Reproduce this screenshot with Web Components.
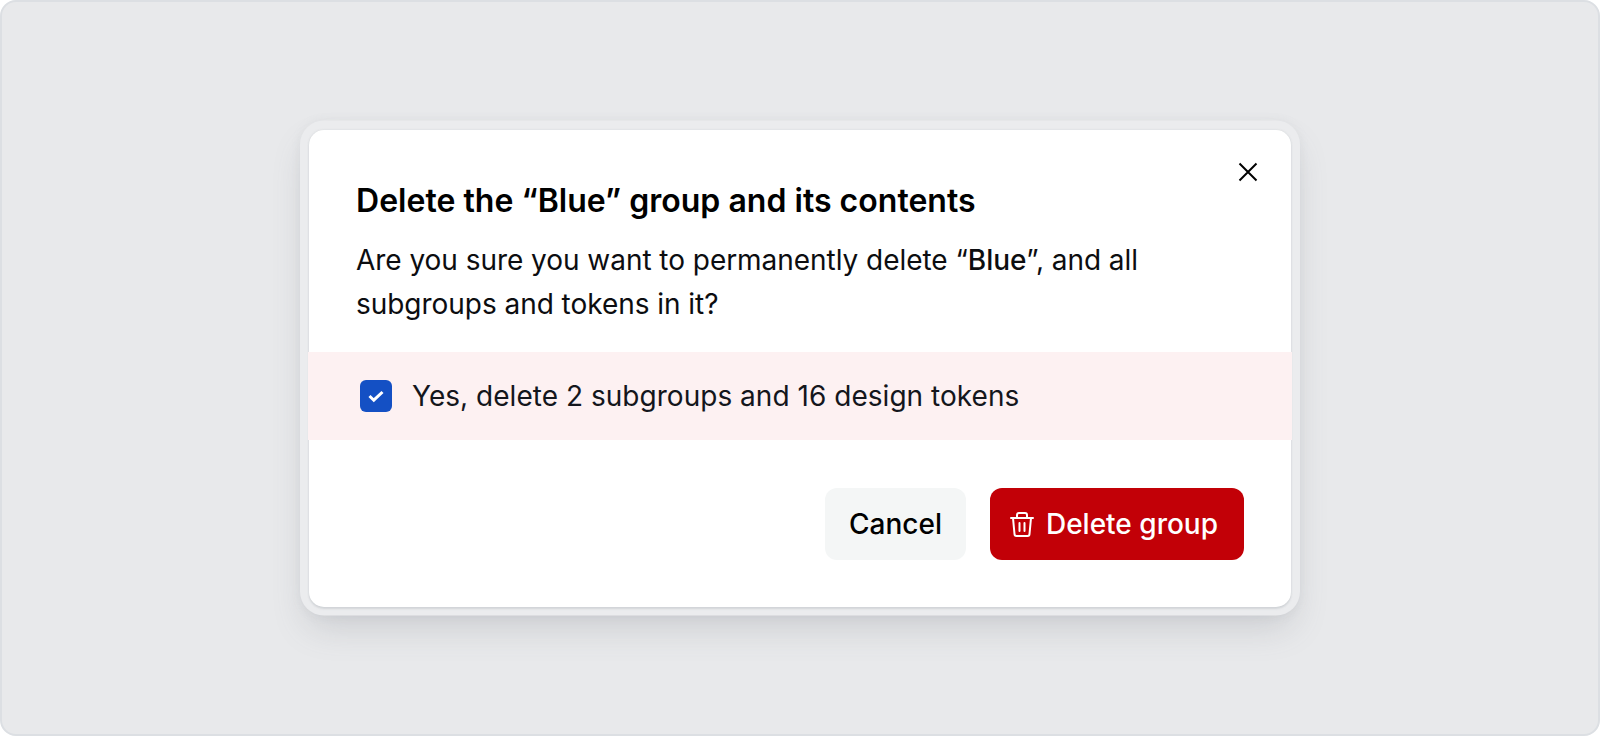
<!DOCTYPE html>
<html lang="en">
<head>
<meta charset="utf-8">
<title>Delete group</title>
<style>
  html, body { margin: 0; height: 100%; }
  body { font-family: Inter, "Liberation Sans", sans-serif; color: #000; }
  b { font-weight: 500; }
</style>
</head>
<body>
<app-canvas>
  <confirm-dialog heading="Delete the “Blue” group and its contents">
    <span slot="body">Are you sure you want to permanently delete “<b>Blue</b>”, and all subgroups and tokens in it?</span>
    <check-row slot="confirm">Yes, delete 2 subgroups and 16 design tokens</check-row>
    <action-button slot="actions">Cancel</action-button>
    <action-button slot="actions" variant="danger" icon="trash">Delete group</action-button>
  </confirm-dialog>
</app-canvas>

<script>
class AppCanvas extends HTMLElement {
  constructor() {
    super();
    this.attachShadow({ mode: 'open' });
    this.shadowRoot.innerHTML = `
      <style>
        :host {
          display: flex;
          align-items: center;
          justify-content: center;
          box-sizing: border-box;
          width: 100%;
          height: 736px;
          background: #e8e9eb;
          border: 2px solid #dcdfe3;
          border-radius: 16px;
        }
      </style>
      <slot></slot>
    `;
  }
}

class ConfirmDialog extends HTMLElement {
  constructor() {
    super();
    this.attachShadow({ mode: 'open' });
    this.shadowRoot.innerHTML = `
      <style>
        :host {
          display: block;
          position: relative;
          box-sizing: border-box;
          width: 982px;
          height: 477px;
          margin-top: 1px;
          background: #fff;
          border-radius: 15px;
          box-shadow:
            0 1.5px 2px rgba(180, 184, 190, .4),
            0 0 2px rgba(195, 199, 204, .5),
            0 -0.5px 0 9px #ebecee,
            0 0 10px 9px rgba(150, 154, 162, .12),
            0 18px 34px 2px rgba(100, 105, 115, .22);
        }
        .head { padding: 50px 47px 0; }
        h2 {
          margin: 0;
          font: 600 32px/42px Inter, sans-serif;
          letter-spacing: 0.02px;
        }
        .body {
          margin: 16px 0 0;
          font: 400 28px/44px Inter, sans-serif;
          letter-spacing: -0.04px;
          color: #0c0d10;
        }
        .confirm { margin: 26px -1px 0; }
        .actions {
          display: flex;
          justify-content: flex-end;
          gap: 24px;
          padding: 48px 47px 0;
        }
        .close {
          position: absolute;
          top: 30px;
          right: 31px;
          width: 24px;
          height: 24px;
          display: block;
        }
      </style>
      <svg class="close" viewBox="0 0 24 24" fill="none" stroke="#000" stroke-width="2">
        <path d="M3.500 3.500l17 17M20.500 3.500l-17 17"/>
      </svg>
      <div class="head">
        <h2>${this.getAttribute('heading')}</h2>
        <p class="body"><slot name="body"></slot></p>
      </div>
      <div class="confirm"><slot name="confirm"></slot></div>
      <div class="actions"><slot name="actions"></slot></div>
    `;
  }
}

class CheckRow extends HTMLElement {
  constructor() {
    super();
    this.attachShadow({ mode: 'open' });
    this.shadowRoot.innerHTML = `
      <style>
        :host {
          display: flex;
          align-items: center;
          gap: 20px;
          height: 88px;
          padding-left: 52px;
          background: #fdf1f2;
          font: 400 28px/40px Inter, sans-serif;
          letter-spacing: 0.03px;
          color: #14161c;
        }
        .box {
          width: 32px;
          height: 32px;
          flex: none;
          border-radius: 6px;
          background: #1450c4;
          display: flex;
          align-items: center;
          justify-content: center;
        }
      </style>
      <span class="box">
        <svg width="18" height="14" viewBox="0 0 18 14" fill="none" stroke="#fff" stroke-width="3">
          <path d="M2.500 7l4.300 4.200L15.500 3"/>
        </svg>
      </span>
      <slot></slot>
    `;
  }
}

class ActionButton extends HTMLElement {
  constructor() {
    super();
    this.attachShadow({ mode: 'open' });
    const icon = this.getAttribute('icon') === 'trash' ? `
      <svg width="24" height="25" viewBox="0 0 24 25" fill="none" stroke="currentColor" stroke-width="2" stroke-linejoin="round" stroke-linecap="round">
        <path d="M1 6h22M7 6V3a2 2 0 0 1 2-2h6a2 2 0 0 1 2 2v3M3 6l1.500 16a2 2 0 0 0 2 2h11a2 2 0 0 0 2-2L21 6M9.500 11v8M14.500 11v8"/>
      </svg>` : '';
    this.shadowRoot.innerHTML = `
      <style>
        :host {
          display: inline-flex;
          align-items: center;
          justify-content: center;
          gap: 12px;
          box-sizing: border-box;
          height: 72px;
          padding: 0 24px;
          border-radius: 12px;
          background: #f4f6f6;
          color: #000;
          font: 500 28px/40px Inter, sans-serif;
        }
        :host([variant="danger"]) {
          padding: 0 26px 0 20px;
          background: #c20007;
          color: #fff;
        }
      </style>
      ${icon}
      <slot></slot>
    `;
  }
}

customElements.define('app-canvas', AppCanvas);
customElements.define('confirm-dialog', ConfirmDialog);
customElements.define('check-row', CheckRow);
customElements.define('action-button', ActionButton);
</script>
</body>
</html>
